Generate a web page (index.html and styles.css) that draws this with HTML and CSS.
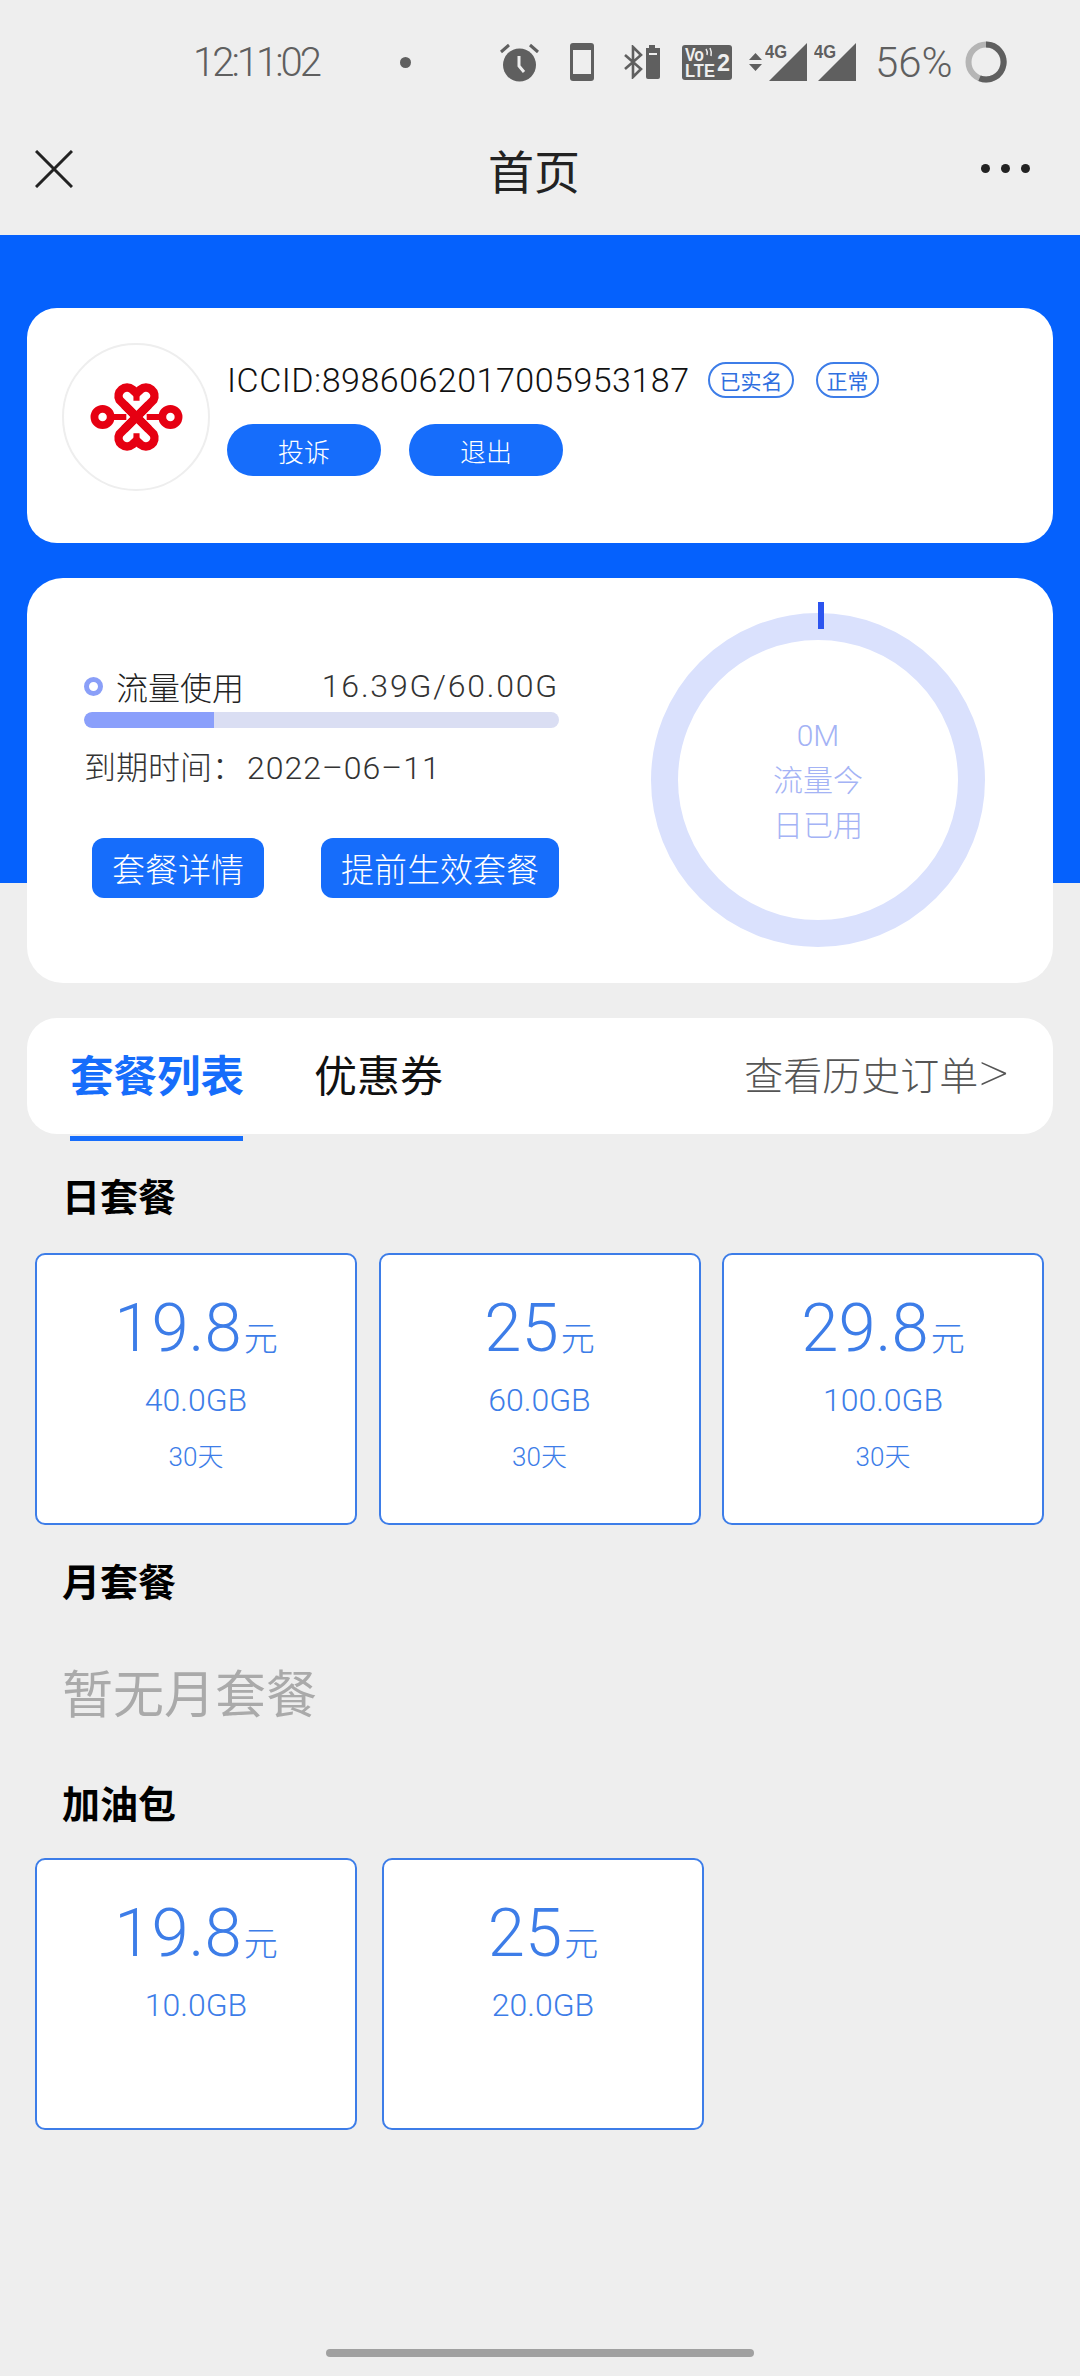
FILE: index.html
```html
<!DOCTYPE html>
<html lang="zh-CN">
<head>
    <meta charset="UTF-8">
    <meta name="viewport" content="width=device-width, initial-scale=1.0">
    <title>首页</title>
    <link rel="stylesheet" href="styles.css">
</head>
<body>
    <!-- 状态栏 -->
    <div class="status-bar">
        <span class="clock">12:11:02</span>
        <span class="status-dot"></span>
        <svg class="ic-alarm" width="41" height="40" viewBox="0 0 41 40">
            <path d="M2 10 L10 3 M39 10 L31 3" stroke="#5f5f5f" stroke-width="3" fill="none"/>
            <circle cx="20.5" cy="23" r="16.5" fill="#5f5f5f"/>
            <path d="M20 14 V24 L25 30" stroke="#eee" stroke-width="3" fill="none"/>
        </svg>
        <svg class="ic-phone" width="24" height="38" viewBox="0 0 24 38">
            <rect x="0" y="0" width="24" height="38" rx="3" fill="#5f5f5f"/>
            <rect x="3" y="7" width="18" height="24" fill="#eee"/>
        </svg>
        <svg class="ic-bt" width="36" height="34" viewBox="0 0 36 34">
            <path d="M1 10 L17 24 L9 32 V2 L17 10 L1 24" stroke="#5f5f5f" stroke-width="2.6" fill="none"/>
            <path d="M25 0 H31 V3 H36 V32 Q36 34 34 34 H24 Q22 34 22 32 V3 H25 Z" fill="#5f5f5f"/>
            <rect x="25" y="8" width="8" height="2" fill="#eee"/>
        </svg>
        <svg class="ic-volte" width="50" height="35" viewBox="0 0 50 35">
            <rect width="50" height="35" rx="3" fill="#5f5f5f"/>
            <text x="3" y="16" class="volte-small" textLength="19" lengthAdjust="spacingAndGlyphs">Vo</text>
            <text x="3" y="32" class="volte-small" textLength="30" lengthAdjust="spacingAndGlyphs">LTE</text>
            <text x="35" y="26" class="volte-big" textLength="13" lengthAdjust="spacingAndGlyphs">2</text>
            <path d="M24 4 Q26 7 25 10 M28 3 Q30 7 29 11" stroke="#eee" stroke-width="1.5" fill="none"/>
        </svg>
        <svg class="ic-updown" width="13" height="18" viewBox="0 0 13 18">
            <path d="M6.5 0 L13 7 H0 Z M0 11 H13 L6.5 18 Z" fill="#5f5f5f"/>
        </svg>
        <svg class="ic-signal" width="42" height="38" viewBox="0 0 42 38">
            <path d="M42 0 V38 H4 Z" fill="#5f5f5f"/>
            <text x="0" y="15" class="net-type" textLength="22" lengthAdjust="spacingAndGlyphs">4G</text>
        </svg>
        <svg class="ic-signal-2" width="42" height="38" viewBox="0 0 42 38">
            <path d="M42 0 V38 H4 Z" fill="#5f5f5f"/>
            <text x="0" y="15" class="net-type" textLength="22" lengthAdjust="spacingAndGlyphs">4G</text>
        </svg>
        <span class="battery-text">56%</span>
        <svg class="ic-battery" width="42" height="42" viewBox="0 0 42 42">
            <circle cx="21" cy="21" r="17.5" fill="none" stroke="#b5b5b5" stroke-width="6"/>
            <path d="M21 3.5 A17.5 17.5 0 1 1 14.5 37.2" fill="none" stroke="#5f5f5f" stroke-width="6"/>
        </svg>
    </div>

    <!-- 标题栏 -->
    <div class="nav-bar">
        <svg class="nav-close" width="38" height="38" viewBox="0 0 38 38">
            <path d="M1 1 L37 37 M37 1 L1 37" stroke="#222" stroke-width="3" fill="none"/>
        </svg>
        <span class="nav-title">首页</span>
        <span class="nav-more"><i></i><i></i><i></i></span>
    </div>

    <div class="hero">
        <div class="card sim-card">
            <div class="logo-circle">
                <svg width="95" height="76" viewBox="-140 -110 280 220">
                    <g fill="none" stroke="#e60012" stroke-width="25">
                        <path d="M36 36 L-50 -50 A25 25 0 0 1 -12 -81 L0 -70 L12 -81 A25 25 0 0 1 50 -50 L-36 36"/>
                        <path d="M36 -36 L-50 50 A25 25 0 0 0 -12 81 L0 70 L12 81 A25 25 0 0 0 50 50 L-36 -36"/>
                        <circle cx="-100" cy="0" r="24" stroke-width="23"/>
                        <circle cx="100" cy="0" r="24" stroke-width="23"/>
                        <path d="M-76 0 H-30 M76 0 H30 M0 -72 V-48 M0 72 V48" stroke-width="18"/>
                    </g>
                    <path d="M-62 -13 L-48 -27 M62 -13 L48 -27 M-62 13 L-48 27 M62 13 L48 27" stroke="#fff" stroke-width="5" fill="none"/>
                </svg>
            </div>
            <div class="sim-info">
                <div class="sim-line">
                    <span class="iccid">ICCID:8986062017005953187</span>
                    <span class="tag tag-real">已实名</span>
                    <span class="tag tag-ok">正常</span>
                </div>
                <div class="sim-btns">
                    <button type="button" class="pill">投诉</button>
                    <button type="button" class="pill">退出</button>
                </div>
            </div>
        </div>

        <div class="card usage-card">
            <div class="usage-left">
                <div class="usage-head">
                    <span class="usage-name"><i class="ring-dot"></i>流量使用</span>
                    <span class="usage-num">16.39G/60.00G</span>
                </div>
                <div class="bar"><div class="bar-fill" style="width: 27.4%"></div></div>
                <div class="expire">到期时间：<span>2022–06–11</span></div>
                <div class="usage-btns">
                    <button type="button" class="btn">套餐详情</button>
                    <button type="button" class="btn">提前生效套餐</button>
                </div>
            </div>
            <div class="gauge">
                <i class="gauge-tick"></i>
                <div class="gauge-text">0M<br>流量今<br>日已用</div>
            </div>
        </div>
    </div>

    <div class="tab-card">
        <span class="tab active">套餐列表</span>
        <span class="tab">优惠券</span>
        <span class="history">查看历史订单<em>&gt;</em></span>
    </div>
    <div class="tab-line"></div>

    <h3 class="sec-title first">日套餐</h3>
    <div class="plans">
        <div class="plan">
            <div class="price">19.8<small>元</small></div>
            <div class="flow">40.0GB</div>
            <div class="days">30天</div>
        </div>
        <div class="plan">
            <div class="price">25<small>元</small></div>
            <div class="flow">60.0GB</div>
            <div class="days">30天</div>
        </div>
        <div class="plan">
            <div class="price">29.8<small>元</small></div>
            <div class="flow">100.0GB</div>
            <div class="days">30天</div>
        </div>
    </div>

    <h3 class="sec-title">月套餐</h3>
    <div class="empty">暂无月套餐</div>

    <h3 class="sec-title">加油包</h3>
    <div class="plans addon">
        <div class="plan">
            <div class="price">19.8<small>元</small></div>
            <div class="flow">10.0GB</div>
        </div>
        <div class="plan">
            <div class="price">25<small>元</small></div>
            <div class="flow">20.0GB</div>
        </div>
    </div>

    <div class="home-bar"></div>
</body>
</html>
```

FILE: styles.css
```css
* {
    box-sizing: border-box;
}

body {
    margin: 0;
    height: 2376px;
    overflow: hidden;
    background: #eee;
    font-family: Roboto, "Noto Sans CJK SC", sans-serif;
    font-weight: 300;
    color: #222;
}

/* 状态栏 */
.status-bar {
    display: flex;
    align-items: center;
    height: 124px;
    padding-left: 193px;
    color: #5f5f5f;
}

.clock {
    width: 203px;
    font-size: 40px;
    letter-spacing: -3px;
}

.status-dot {
    width: 11px;
    height: 11px;
    margin-left: 4px;
    margin-right: 88px;
    border-radius: 50%;
    background: #5f5f5f;
}

.ic-phone { margin-left: 30px; }
.ic-bt { margin-left: 30px; }
.ic-volte { margin-left: 22px; }
.ic-updown { margin-left: 17px; }
.ic-signal { margin-left: 3px; }
.ic-signal-2 { margin-left: 7px; }

.volte-small {
    font: 700 18px "Liberation Sans", sans-serif;
    fill: #eee;
}

.volte-big {
    font: 700 24px "Liberation Sans", sans-serif;
    fill: #eee;
}

.net-type {
    font: 700 18px "Liberation Sans", sans-serif;
    fill: #5f5f5f;
}

.battery-text {
    margin-left: 19px;
    font-size: 42px;
}

.ic-battery {
    margin-left: 12px;
}

/* 标题栏 */
.nav-bar {
    display: flex;
    align-items: center;
    justify-content: space-between;
    height: 111px;
    padding: 0 50px 22px 35px;
}

.nav-title {
    font-size: 46px;
    font-weight: 400;
    margin-left: 14px;
}

.nav-more {
    display: flex;
    gap: 11px;
}

.nav-more i {
    width: 9px;
    height: 9px;
    border-radius: 50%;
    background: #222;
}

/* 蓝色顶部 */
.hero {
    padding: 73px 27px 0;
    background: linear-gradient(#0561fd 648px, transparent 648px);
}

.card {
    background: #fff;
    border-radius: 30px;
}

.sim-card {
    display: flex;
    height: 235px;
    padding: 35px 35px;
}

.logo-circle {
    display: flex;
    align-items: center;
    justify-content: center;
    width: 148px;
    height: 148px;
    border: 2px solid #eee;
    border-radius: 50%;
}

.sim-info {
    margin-left: 17px;
}

.sim-line {
    display: flex;
    align-items: center;
    height: 36px;
    margin-top: 19px;
}

.iccid {
    width: 481px;
    font-size: 34px;
    letter-spacing: 0.5px;
    color: #111;
}

.tag {
    display: flex;
    align-items: center;
    justify-content: center;
    height: 36px;
    border: 2px solid #3d7de8;
    border-radius: 18px;
    font-size: 21px;
    font-weight: 400;
    color: #2f6fe0;
}

.tag-real { width: 86px; }
.tag-ok { width: 63px; margin-left: 22px; }

.sim-btns {
    display: flex;
    gap: 28px;
    margin-top: 26px;
}

.pill {
    width: 154px;
    height: 52px;
    border: 0;
    border-radius: 26px;
    background: #166dfb;
    color: #fff;
    font: inherit;
    font-size: 26px;
}

.usage-card {
    display: flex;
    height: 405px;
    margin-top: 35px;
    border-radius: 36px;
}

.usage-left {
    width: 532px;
    padding: 90px 0 0 57px;
}

.usage-head {
    display: flex;
    align-items: center;
    justify-content: space-between;
    height: 36px;
}

.usage-name {
    display: flex;
    align-items: center;
    font-size: 32px;
}

.ring-dot {
    width: 19px;
    height: 19px;
    margin-right: 13px;
    border: 5px solid #8a9ff8;
    border-radius: 50%;
}

.usage-num {
    font-size: 32px;
    letter-spacing: 1.8px;
    color: #333;
}

.bar {
    height: 16px;
    margin-top: 8px;
    border-radius: 8px;
    background: #dadef3;
    overflow: hidden;
}

.bar-fill {
    height: 100%;
    border-radius: 8px 0 0 8px;
    background: #8a9ffb;
}

.expire {
    margin-top: 20px;
    font-size: 32px;
    line-height: 40px;
    color: #333;
}

.expire span {
    margin-left: 3px;
    letter-spacing: 1px;
}

.usage-btns {
    display: flex;
    justify-content: space-between;
    margin: 50px 0 0 8px;
}

.btn {
    height: 60px;
    padding: 0 20px;
    border: 0;
    border-radius: 12px;
    background: #166dfb;
    color: #fff;
    font: inherit;
    font-size: 33px;
}

.gauge {
    display: flex;
    align-items: center;
    justify-content: center;
    position: relative;
    width: 334px;
    height: 334px;
    margin: 35px 0 0 92px;
    border: 27px solid #dae1fd;
    border-radius: 50%;
}

.gauge-tick {
    position: absolute;
    top: -38px;
    left: 50%;
    width: 6px;
    height: 27px;
    background: #2c54ef;
}

.gauge-text {
    text-align: center;
    font-size: 30px;
    line-height: 45px;
    color: #a4b3f5;
}

/* 选项卡 */
.tab-card {
    display: flex;
    align-items: center;
    height: 116px;
    margin: 35px 27px 0;
    padding: 0 44px 6px 43px;
    background: #fff;
    border-radius: 30px;
}

.tab {
    font-size: 43px;
    font-weight: 400;
    color: #111;
}

.tab.active {
    margin-right: 70px;
    font-size: 43.5px;
    font-weight: 700;
    color: #166dfb;
}

.history {
    display: flex;
    align-items: center;
    margin-left: auto;
    font-size: 39px;
    color: #555;
}

.history em {
    font-style: normal;
    font-size: 60px;
    font-weight: 100;
    line-height: 1;
}

.tab-line {
    width: 173px;
    height: 5px;
    margin: 2px 0 0 70px;
    background: #166dfb;
}

/* 套餐 */
.sec-title {
    height: 50px;
    margin: 54px 0 0 62px;
    font-size: 38px;
    line-height: 50px;
    font-weight: 700;
    color: #000;
}

.sec-title.first {
    margin-top: 32px;
}

.plans {
    display: flex;
    gap: 21.5px;
    margin: 30px 0 0 35px;
}

.plans.addon {
    gap: 25px;
    margin-top: 28px;
}

.plans + .sec-title {
    margin-top: 33px;
}

.plan {
    display: flex;
    flex-direction: column;
    align-items: center;
    width: 322px;
    height: 272px;
    padding-top: 34px;
    background: #fff;
    border: 2px solid #3d7de8;
    border-radius: 10px;
    color: #3d7de8;
}

.price {
    font-size: 67px;
    line-height: 78px;
}

.price small {
    font-size: 34px;
    margin-left: 2px;
}

.flow {
    margin-top: 2px;
    font-size: 32px;
    line-height: 40px;
}

.days {
    margin-top: 17px;
    font-size: 26px;
    line-height: 40px;
}

.empty {
    height: 60px;
    margin: 58px 0 0 62px;
    font-size: 51px;
    font-weight: 400;
    line-height: 60px;
    color: #aaa;
}

.home-bar {
    width: 428px;
    height: 8px;
    margin: 219px auto 0;
    border-radius: 4px;
    background: #a0a0a0;
}
```
